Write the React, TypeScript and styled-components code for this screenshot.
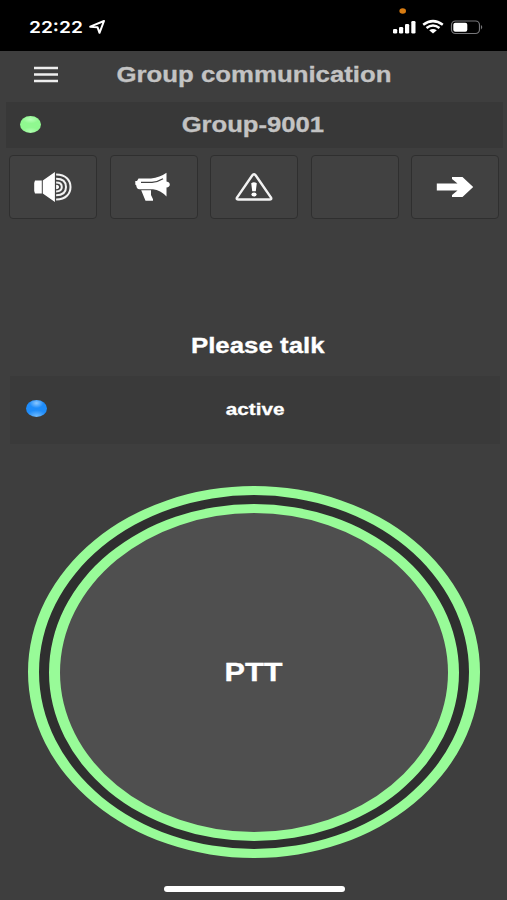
import React from "react";
import styled, { createGlobalStyle } from "styled-components";

const GlobalStyle = createGlobalStyle`
  * { box-sizing: border-box; }
  html, body { margin: 0; padding: 0; background: #3e3e3e; }
  svg { display: block; flex: none; }
`;

const Screen = styled.main`
  width: 507px;
  height: 900px;
  overflow: hidden;
  display: flex;
  flex-direction: column;
  background: #3e3e3e;
  color: #fff;
  font-family: "Liberation Sans", Arial, sans-serif;
  font-weight: 700;
`;

const Wide = styled.span<{ $size: number; $scale?: number; $color?: string }>`
  display: block;
  margin: 0;
  white-space: nowrap;
  line-height: 1.2;
  font-size: ${(p) => p.$size}px;
  color: ${(p) => p.$color ?? "#fff"};
  -webkit-text-stroke: 0.3px currentColor;
  transform: scaleX(${(p) => p.$scale ?? 1.22});
`;

const StatusBar = styled.header`
  height: 51px;
  flex: none;
  display: flex;
  justify-content: space-between;
  padding: 7px 22px 0 29px;
  background: #000;
`;

const Clock = styled.div`
  display: flex;
  align-items: center;
  gap: 6px;
  height: 40px;
`;

const Time = styled.span`
  width: 54px;
  font: 600 16.5px/20px Inter, sans-serif;
  transform: scaleX(1.16);
  transform-origin: left;
  white-space: nowrap;
`;

const TitleBar = styled.div`
  height: 51px;
  flex: none;
  display: grid;
  grid-template-columns: 91px 326px 1fr;
  align-items: center;
  justify-items: center;
  padding-bottom: 3px;
`;

const MenuButton = styled.button`
  border: 0;
  padding: 0 0 2px;
  background: none;
`;

const GroupBar = styled.section`
  height: 46px;
  flex: none;
  margin: 0 4px 0 6px;
  display: grid;
  grid-template-columns: 49px 1fr 53px;
  align-items: center;
  justify-items: center;
  background: #383838;
`;

const Toolbar = styled.nav`
  flex: none;
  display: grid;
  grid-template-columns: repeat(5, 1fr);
  gap: 12.5px;
  margin: 7px 8px 0 9px;
`;

const ToolButton = styled.button`
  height: 64px;
  padding: 0;
  display: flex;
  align-items: center;
  justify-content: center;
  border: 1.5px solid #2f2f2f;
  border-radius: 4px;
  background: #414141;
`;

const Prompt = styled.div`
  height: 157px;
  flex: none;
  display: flex;
  align-items: flex-end;
  justify-content: center;
  padding: 0 0 18px 9px;
`;

const StatePanel = styled.section`
  height: 68px;
  flex: none;
  margin: 0 7px 0 10px;
  display: grid;
  grid-template-columns: 52px 1fr 52px;
  align-items: center;
  justify-items: center;
  background: #3a3a3a;
`;

const Led = styled.i<{ $tone: "green" | "blue" }>`
  width: 21px;
  height: 17px;
  margin-bottom: ${(p) => (p.$tone === "blue" ? 3 : 1)}px;
  border-radius: 50%;
  background: ${(p) =>
    p.$tone === "green"
      ? "radial-gradient(ellipse 8px 4px at 50% 20%, #b8ffb8, transparent), radial-gradient(ellipse 8px 4px at 50% 90%, #b0ffb0, transparent), #90f890"
      : "radial-gradient(ellipse 7px 5px at 50% 18%, #8cc8ff, transparent), radial-gradient(ellipse 10px 6px at 50% 95%, #6ebaff, transparent), #1e8cfa"};
`;

const TalkArea = styled.section`
  padding: 42px 27px 0 28px;
  flex: none;
`;

const OuterRing = styled.div`
  height: 372px;
  padding: 8.5px 10px;
  border: solid #98fb98;
  border-width: 9px 11px;
  border-radius: 50%;
  background: #2f2f2f;
`;

const PttButton = styled.button`
  width: 100%;
  height: 100%;
  padding: 2px 0 0;
  display: flex;
  align-items: center;
  justify-content: center;
  border: solid #98fb98;
  border-width: 9px 11px;
  border-radius: 50%;
  background: #4f4f4f;
  font: inherit;
`;

const HomeIndicator = styled.div`
  width: 181px;
  height: 6px;
  flex: none;
  margin: 28px auto 0 164px;
  border-radius: 3px;
  background: #fff;
`;

const LocationIcon = () => (
  <svg width="17" height="14" viewBox="0 0 17 14">
    <path d="M1.2 6.7 15 1 10.5 12.8 8.5 7.2Z" fill="none" stroke="#fff" strokeWidth="2" strokeLinejoin="round" />
  </svg>
);

const StatusIcons = () => (
  <svg width="94" height="30" viewBox="391 7 94 30">
    <ellipse cx="402.7" cy="11" rx="3.3" ry="2.7" fill="#d87c12" />
    <g fill="#fff">
      <rect x="393" y="29" width="4.2" height="4.5" rx="1.3" />
      <rect x="399" y="27" width="4.2" height="6.5" rx="1.3" />
      <rect x="405" y="24" width="4.2" height="9.5" rx="1.3" />
      <rect x="411.3" y="21" width="4.2" height="12.5" rx="1.3" />
      <path d="M429.2 30.2Q433 27.6 436.8 30.2L433 33.5Z" />
    </g>
    <g fill="none" stroke="#fff" strokeWidth="2.5">
      <path d="M423.2 24.8Q433 17.4 442.8 24.8" />
      <path d="M426.5 28Q433 23 439.5 28" />
    </g>
    <rect x="451.5" y="21" width="28" height="12.5" rx="4" fill="none" stroke="#77777a" strokeWidth="1.2" />
    <path d="M481 25Q483.5 27.2 481 29.5Z" fill="#77777a" />
    <rect x="453.3" y="22.7" width="14" height="9.1" rx="2" fill="#fff" />
  </svg>
);

const MenuIcon = () => (
  <svg width="24" height="17" viewBox="0 0 24 17">
    <path d="M0 2H24M0 8.5H24M0 15H24" stroke="#eee" strokeWidth="2.3" />
  </svg>
);

const SpeakerIcon = () => (
  <svg width="38" height="32" viewBox="0 0 38 32">
    <path d="M1 9.5H7.8V22.5H1L.2 20V12ZM8.8 9.5 20.9 1V31L8.8 22.5Z" fill="#fff" />
    <g fill="none" stroke="#f2f2f2" strokeWidth="2">
      <path d="M22.1 3.5C32.5 3.5 36.5 10 36.5 16S32.5 28.5 22.1 28.5" />
      <path d="M22.1 7.7C29.7 7.7 32 12 32 16S29.7 24.3 22.1 24.3" />
      <path d="M22.1 11.6C26.3 11.6 27.8 13.5 27.8 16S26.3 20.4 22.1 20.4" />
    </g>
    <path d="M22.1 13.8Q25 14 25 16T22.1 18.2Z" fill="#fff" />
  </svg>
);

const MegaphoneIcon = () => (
  <svg width="38" height="30" viewBox="0 0 38 30">
    <path d="M3.5 6.5H16Q25 5.5 31.5 .8V9.5Q34.8 10 34.8 12.5T31.5 15.5V24.5Q25.5 18.3 18 17.3H4.5Q1.5 17 1.3 13.5L.3 12.5V9H2Z" fill="#fff" />
    <path d="M6 10.3H17Q23.5 9.7 28 6.8" fill="none" stroke="#414141" strokeWidth="1.3" />
    <path d="M6.2 18.2H16V23L18 27.3V28.7H10.5Z" fill="#fff" />
  </svg>
);

const WarningIcon = () => (
  <svg width="38" height="30" viewBox="0 0 38 30">
    <path d="M19 2.3Q20 2.3 20.8 3.5L36 25.5Q37 27.5 34.5 27.5H3.5Q1 27.5 2 25.5L17.2 3.5Q18 2.3 19 2.3Z" fill="none" stroke="#f2f2f2" strokeWidth="2.4" />
    <path d="M16.2 11.2Q19 9.4 21.8 11.2L20.8 19.3H17.2Z" fill="#fff" />
    <ellipse cx="19" cy="22.5" rx="2.6" ry="2.1" fill="#fff" />
  </svg>
);

const ArrowIcon = () => (
  <svg width="38" height="22" viewBox="0 0 38 22">
    <path d="M.8 7.5H21.5L16 3V1H26.5L37.2 11 26.5 21H16V19L21.5 14.5H.8Z" fill="#fff" />
  </svg>
);

const tools = [
  { label: "Speaker", Icon: SpeakerIcon },
  { label: "Announcement", Icon: MegaphoneIcon },
  { label: "Alert", Icon: WarningIcon },
  { label: "Unassigned", Icon: null },
  { label: "Next", Icon: ArrowIcon },
];

export default function App() {
  return (
    <Screen>
      <GlobalStyle />
      <StatusBar>
        <Clock>
          <Time>22:22</Time>
          <LocationIcon />
        </Clock>
        <StatusIcons />
      </StatusBar>
      <TitleBar>
        <MenuButton aria-label="Menu">
          <MenuIcon />
        </MenuButton>
        <Wide as="h1" $size={21.2} $scale={1.217} $color="#c3c3c3">Group communication</Wide>
      </TitleBar>
      <GroupBar>
        <Led $tone="green" />
        <Wide $size={21.2} $scale={1.21} $color="#c3c3c3">Group-9001</Wide>
      </GroupBar>
      <Toolbar>
        {tools.map(({ label, Icon }) => (
          <ToolButton key={label} aria-label={label}>
            {Icon && <Icon />}
          </ToolButton>
        ))}
      </Toolbar>
      <Prompt>
        <Wide $size={21.2}>Please talk</Wide>
      </Prompt>
      <StatePanel>
        <Led $tone="blue" />
        <Wide $size={17}>active</Wide>
      </StatePanel>
      <TalkArea>
        <OuterRing>
          <PttButton>
            <Wide $size={26} $scale={1.18}>PTT</Wide>
          </PttButton>
        </OuterRing>
      </TalkArea>
      <HomeIndicator />
    </Screen>
  );
}
